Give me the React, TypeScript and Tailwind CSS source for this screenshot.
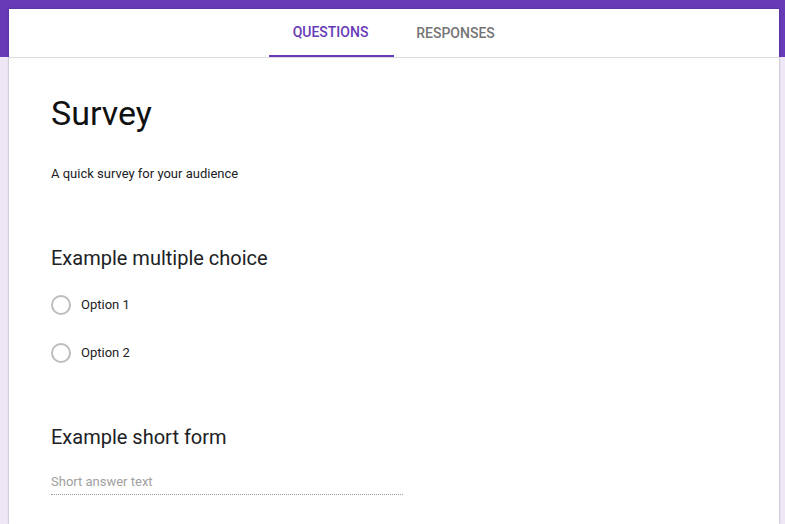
import React from "react";

export default function App() {
  return (
    <div className="relative h-[524px] w-[785px] overflow-hidden bg-[#ede7f6] font-[Roboto,sans-serif]">
      <div className="h-[57px] bg-[#673ab7]" />
      <div className="absolute left-[9px] right-[6px] top-[9px] bottom-0 bg-white shadow-[0_0_2px_rgba(0,0,0,0.35)]">
        <div className="flex h-[49px] justify-center border-b border-[#dadce0]">
          <div className="flex h-[48px] w-[125px] items-center justify-center border-b-2 border-[#673ab7] pr-[2px] text-[14px] font-medium text-[#673ab7]">
            QUESTIONS
          </div>
          <div className="flex h-[48px] w-[125px] items-center justify-center pr-[2px] text-[14px] font-medium text-[#757575]">
            RESPONSES
          </div>
        </div>
        <div className="pl-[42px] pt-[35px]">
          <div className="text-[34px] leading-[40px] text-[#111111]">Survey</div>
          <div className="mt-[31px] text-[13px] leading-[20px] text-[#202124]">
            A quick survey for your audience
          </div>
          <div className="mt-[60px] text-[20px] leading-[28px] text-[#202124]">
            Example multiple choice
          </div>
          <div className="mt-[9px]">
            {["Option 1", "Option 2"].map((o) => (
              <div key={o} className="flex h-[48px] items-center">
                <div className="h-[20px] w-[20px] rounded-full border-2 border-[#bdbdbd]" />
                <span className="ml-[10px] text-[13px] text-[#202124]">{o}</span>
              </div>
            ))}
          </div>
          <div className="mt-[46px] text-[20px] leading-[28px] text-[#202124]">
            Example short form
          </div>
          <div className="mt-[21px] w-[352px] border-b border-dotted border-[#9e9e9e] pb-[2px] text-[13px] leading-[20px] text-[#a0a0a0]">
            Short answer text
          </div>
        </div>
      </div>
    </div>
  );
}
